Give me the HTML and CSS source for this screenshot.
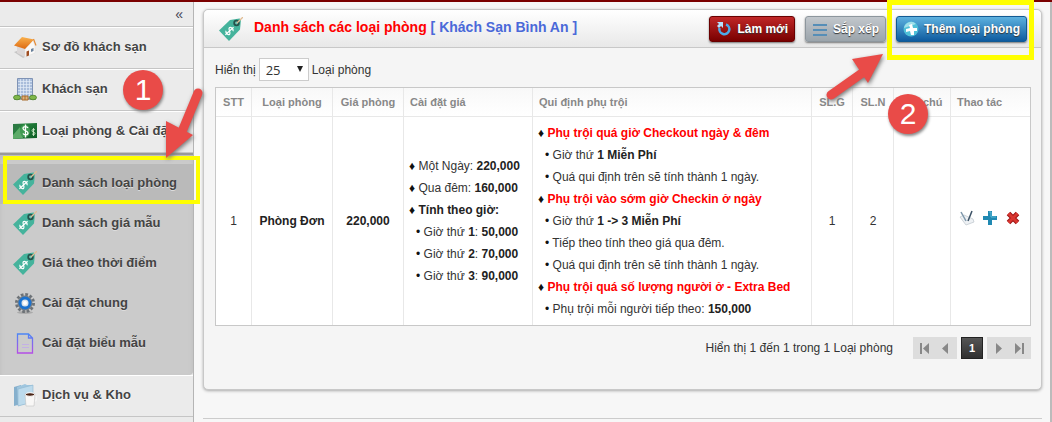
FILE: index.html
```html
<!DOCTYPE html>
<html lang="vi">
<head>
    <meta charset="UTF-8">
    <meta name="viewport" content="width=device-width, initial-scale=1.0">
    <title>Danh sách các loại phòng</title>
    <link rel="stylesheet" href="styles.css">
</head>
<body>
    <!-- Shared icons -->
    <svg class="sprite" aria-hidden="true">
        <symbol id="tag" viewBox="0 0 24 24">
            <path d="M0 13.500L11 3l9.500-1.500 1.500 1-1 10L10 24z" fill="#45b39c"/>
            <circle cx="17.500" cy="6" r="2.300" fill="#6fc4b2" stroke="#24524b" stroke-width="1.800"/>
            <path d="M18 6l6-6" stroke="#e0bd95" stroke-width="1.300"/>
            <path d="M2.500-2.500C1.500-4.500-2.500-4-2.500-2S2.500 0 2.500 2-1.500 4.500-2.500 2.500M0-5.500v11" transform="translate(10.500 14) rotate(48)" fill="none" stroke="#fff" stroke-width="1.200"/>
        </symbol>
        <linearGradient id="sheet" x1="0" y1="0" x2="0" y2="1">
            <stop offset="0" stop-color="#4c86f5"/>
            <stop offset="1" stop-color="#b44de6"/>
        </linearGradient>
        <linearGradient id="cash" x1="0" y1="0" x2="1" y2="1">
            <stop offset="0" stop-color="#2d8f45"/>
            <stop offset="1" stop-color="#0d5c25"/>
        </linearGradient>
        <linearGradient id="roof" x1="0" y1="0" x2="0" y2="1">
            <stop offset="0" stop-color="#f9b04c"/>
            <stop offset="1" stop-color="#dd6a12"/>
        </linearGradient>
    </svg>

    <div class="topbar"></div>
    <div class="layout">
        <nav class="sidebar">
            <button class="collapse" type="button" aria-label="Thu gọn">«</button>
            <a class="menu-item" href="#">
                <svg class="icon" viewBox="0 0 24 24">
                    <path d="M1 17l9 6 2-1-8-6z" fill="#c6c6c6"/>
                    <path d="M4 11l8 3v8l-8-4z" fill="#dcd8d8"/>
                    <path d="M12 14l8-9 2 6v7l-10 4z" fill="#faf8f6" stroke="#ddd" stroke-width=".5"/>
                    <path d="M1 10.500L9 2l12 2.500-9 9.500z" fill="url(#roof)"/>
                    <path d="M20.500 4l2.500 6.500" stroke="#e58a35" stroke-width="1.200"/>
                    <path d="M13.500 16.500l2.500-1v5l-2.500 1z" fill="#9e4c20"/>
                    <path d="M18 14l2.500-1v3l-2.500 1z" fill="#68809b"/>
                </svg>
                Sơ đồ khách sạn
            </a>
            <a class="menu-item" href="#">
                <svg class="icon" viewBox="0 0 24 24">
                    <path d="M4.500 1.500h15v20h-15z" fill="#a9bddb" stroke="#7f93b5"/>
                    <path d="M5 4.500h14M5 7.500h14M5 10.500h14M5 13.500h14M5 16.500h14M7.500 2v17M10.500 2v17M13.500 2v17M16.500 2v17" stroke="#e4edf8" stroke-width=".7"/>
                    <path d="M1 22.500h22" stroke="#a5a59f"/>
                    <path d="M9 19h6v4H9z" fill="#dfb37b" stroke="#a86d2c"/>
                    <path d="M12 19v4" stroke="#a86d2c"/>
                    <ellipse cx="4" cy="20.500" rx="3.500" ry="2.300" fill="#7fb64a" stroke="#4a8128" stroke-width=".8"/>
                    <ellipse cx="20" cy="20.500" rx="3.500" ry="2.300" fill="#7fb64a" stroke="#4a8128" stroke-width=".8"/>
                </svg>
                Khách sạn
            </a>
            <a class="menu-item" href="#">
                <svg class="icon" viewBox="0 0 24 24">
                    <path d="M0 5l24-1v15l-24 1z" fill="url(#cash)"/>
                    <path d="M0 5h9l-9 9z" fill="#2c7a43"/>
                    <path d="M0 16l7-8 3 11-10 1z" fill="#5cab68"/>
                    <ellipse cx="12" cy="12" rx="5" ry="6.500" fill="#3f9a52"/>
                    <path d="M15 9c-1-2-5-2-5 .500s5 2 5 4.500-4 2.500-5 .500M12.500 5.500v13" fill="none" stroke="#fff" stroke-width="1.300"/>
                    <path d="M22 11c-1-1-3-1-3 .800s3 .800 3 2.500-2 1.500-3 .500M20.500 9v8" fill="none" stroke="#cfeaca" stroke-width=".9"/>
                </svg>
                Loại phòng &amp; Cài đặt
            </a>
            <div class="submenu">
                <a class="submenu-item active" href="#">
                    <svg class="icon"><use href="#tag"/></svg>
                    Danh sách loại phòng
                </a>
                <a class="submenu-item" href="#">
                    <svg class="icon"><use href="#tag"/></svg>
                    Danh sách giá mẫu
                </a>
                <a class="submenu-item" href="#">
                    <svg class="icon"><use href="#tag"/></svg>
                    Giá theo thời điểm
                </a>
                <a class="submenu-item" href="#">
                    <svg class="icon" viewBox="0 0 24 24">
                        <ellipse cx="12" cy="21.500" rx="8" ry="1.500" fill="#aaa"/>
                        <circle cx="12" cy="12" r="8.500" fill="none" stroke="#6d7277" stroke-width="3" stroke-dasharray="2.670 1.780"/>
                        <circle cx="12" cy="12" r="7.500" fill="#7b8085"/>
                        <circle cx="12" cy="12" r="5" fill="#dbe3ea" stroke="#1b72cf" stroke-width="3"/>
                        <circle cx="12" cy="12" r="2" fill="#fff"/>
                    </svg>
                    Cài đặt chung
                </a>
                <a class="submenu-item" href="#">
                    <svg class="icon" viewBox="0 0 24 24">
                        <path d="M4.500 3h11l4 4v15h-15zM15.500 3v4h4" fill="none" stroke="url(#sheet)" stroke-width="1.300"/>
                        <path d="M9 13.500h7M9 16.500h7" stroke="#c3b0e6"/>
                    </svg>
                    Cài đặt biểu mẫu
                </a>
            </div>
            <a class="menu-item" href="#">
                <svg class="icon" viewBox="0 0 24 24">
                    <path d="M1 4l7-2v19l-7 2z" fill="#86b0cd"/>
                    <path d="M4 4l8-3 2 1h6v17l-15 4z" fill="#9fc6df"/>
                    <path d="M5 6l15-4v17L5 23z" fill="#bcdaec" stroke="#8fb7d0" stroke-width=".6"/>
                    <path d="M21 13c3.500-1 3.500 5 0 5" fill="none" stroke="#f4f4f4" stroke-width="1.500"/>
                    <path d="M12 11h10l-1 12h-8z" fill="#f8f7f6" stroke="#bbb" stroke-width=".5"/>
                    <ellipse cx="17" cy="11.500" rx="4.500" ry="1.800" fill="#4b2415" stroke="#fff"/>
                </svg>
                Dịch vụ &amp; Kho
            </a>

            <div class="highlight highlight-menu"></div>
            <svg class="arrow arrow-menu" viewBox="0 0 46 84">
                <path d="M37 9L20 50" stroke="#e94b48" stroke-width="9" stroke-linecap="round"/>
                <path d="M5 74V37l27 14z" fill="#e94b48"/>
            </svg>
            <span class="badge badge-menu">1</span>
        </nav>

        <main class="content">
            <section class="panel">
                <header class="panel-header">
                    <svg class="icon"><use href="#tag"/></svg>
                    <h1>Danh sách các loại phòng <span>[ Khách Sạn Bình An ]</span></h1>
                    <button class="btn btn-red" type="button">
                        <svg viewBox="0 0 16 16">
                            <path d="M10 3.500A5 5 0 1 1 3.500 7" fill="none" stroke="#4cabea" stroke-width="2.500"/>
                            <path d="M1 1h6v6L5 5 3 7 1 5l2-2z" fill="#b4e2ff"/>
                        </svg>
                        Làm mới
                    </button>
                    <button class="btn btn-gray" type="button">
                        <svg viewBox="0 0 16 16"><path d="M1 4h14M1 9h14M1 14h14" stroke="#568eb7" stroke-width="2"/></svg>
                        Sắp xếp
                    </button>
                    <button class="btn btn-blue" type="button">
                        <svg viewBox="0 0 16 16">
                            <circle cx="8" cy="8" r="7.500" fill="#4fc0d8"/>
                            <path d="M1 7a7 7 0 0 1 12-4z" fill="#a1e0ea"/>
                            <path d="M6 4l3-1 1 4 4 0v3l-3 0 0 4-3 0-1-4-4 1V8l4-1z" fill="#fff"/>
                        </svg>
                        Thêm loại phòng
                    </button>
                </header>

                <div class="panel-body">
                    <div class="length">
                        <label for="length">Hiển thị</label>
                        <div class="select-box">
                            <select id="length">
                                <option>25</option>
                            </select>
                        </div>
                        <label for="length">Loại phòng</label>
                    </div>

                    <table>
                        <colgroup>
                            <col class="col-stt">
                            <col class="col-room">
                            <col class="col-price">
                            <col class="col-setup">
                            <col>
                            <col class="col-count">
                            <col class="col-count">
                            <col class="col-note">
                            <col class="col-action">
                        </colgroup>
                        <thead>
                            <tr>
                                <th class="center">STT</th>
                                <th class="center">Loại phòng</th>
                                <th class="center">Giá phòng</th>
                                <th>Cài đặt giá</th>
                                <th>Qui định phụ trội</th>
                                <th class="center">SL.G</th>
                                <th class="center">SL.N</th>
                                <th class="center">Ghi chú</th>
                                <th>Thao tác</th>
                            </tr>
                        </thead>
                        <tbody>
                            <tr>
                                <td class="center">1</td>
                                <td class="center"><b>Phòng Đơn</b></td>
                                <td class="center"><b>220,000</b></td>
                                <td>
                                    <ul>
                                        <li>Một Ngày: <b>220,000</b></li>
                                        <li>Qua đêm: <b>160,000</b></li>
                                        <li><b>Tính theo giờ:</b></li>
                                        <li class="sub">Giờ thứ <b>1</b>: <b>50,000</b></li>
                                        <li class="sub">Giờ thứ <b>2</b>: <b>70,000</b></li>
                                        <li class="sub">Giờ thứ <b>3</b>: <b>90,000</b></li>
                                    </ul>
                                </td>
                                <td>
                                    <ul>
                                        <li><b class="red">Phụ trội quá giờ Checkout ngày &amp; đêm</b></li>
                                        <li class="sub">Giờ thứ <b>1 Miễn Phí</b></li>
                                        <li class="sub">Quá qui định trên sẽ tính thành 1 ngày.</li>
                                        <li><b class="red">Phụ trội vào sớm giờ Checkin ở ngày</b></li>
                                        <li class="sub">Giờ thứ <b>1 -&gt; 3 Miễn Phí</b></li>
                                        <li class="sub">Tiếp theo tính theo giá qua đêm.</li>
                                        <li class="sub">Quá qui định trên sẽ tính thành 1 ngày.</li>
                                        <li><b class="red">Phụ trội quá số lượng người ở - Extra Bed</b></li>
                                        <li class="sub">Phụ trội mỗi người tiếp theo: <b>150,000</b></li>
                                    </ul>
                                </td>
                                <td class="center">1</td>
                                <td class="center">2</td>
                                <td></td>
                                <td>
                                    <div class="actions">
                                        <button type="button" aria-label="Sửa">
                                            <svg viewBox="0 0 16 16">
                                                <path d="M1 7l4-2 9 4 1 3-8 3z" fill="#eef1f4" stroke="#c3cad0" stroke-width=".8"/>
                                                <path d="M2 2l5 9" stroke="#7d97ab" stroke-width="1.500"/>
                                                <path d="M13 1L9 11" stroke="#3c5266" stroke-width="1.500"/>
                                            </svg>
                                        </button>
                                        <button type="button" aria-label="Thêm">
                                            <svg viewBox="0 0 16 16">
                                                <path d="M6 1h4v5h5v4h-5v5H6v-5H1V6h5z" fill="#2089b2"/>
                                                <path d="M7 2h2v5h5" fill="none" stroke="#5bb8d6"/>
                                            </svg>
                                        </button>
                                        <button type="button" aria-label="Xóa">
                                            <svg viewBox="0 0 16 16">
                                                <path d="M3.500 3.500l9 9M12.500 3.500l-9 9" stroke="#9f1616" stroke-width="5"/>
                                                <path d="M3.500 3.500l9 9M12.500 3.500l-9 9" stroke="#d93630" stroke-width="3"/>
                                            </svg>
                                        </button>
                                    </div>
                                </td>
                            </tr>
                        </tbody>
                    </table>

                    <div class="table-footer">
                        <span>Hiển thị 1 đến 1 trong 1 Loại phòng</span>
                        <div class="pager">
                            <div class="pager-group">
                                <button type="button" aria-label="Trang đầu">
                                    <svg viewBox="0 0 22 22"><path d="M7 6h2v11H7zM16 6v11l-6-5.500z"/></svg>
                                </button>
                                <button type="button" aria-label="Trang trước">
                                    <svg viewBox="0 0 22 22"><path d="M13 6v11l-6-5.500z"/></svg>
                                </button>
                            </div>
                            <button class="current" type="button">1</button>
                            <div class="pager-group">
                                <button type="button" aria-label="Trang sau">
                                    <svg viewBox="0 0 22 22"><path d="M9 6v11l6-5.500z"/></svg>
                                </button>
                                <button type="button" aria-label="Trang cuối">
                                    <svg viewBox="0 0 22 22"><path d="M6 6v11l6-5.500zM13 6h2v11h-2z"/></svg>
                                </button>
                            </div>
                        </div>
                    </div>
                </div>
            </section>
            <hr>

            <div class="highlight highlight-add"></div>
            <svg class="arrow arrow-add" viewBox="0 0 68 56">
                <path d="M10 46L44 22" stroke="#e94b48" stroke-width="9" stroke-linecap="round"/>
                <path d="M62 5L47 34 31 10z" fill="#e94b48"/>
            </svg>
            <span class="badge badge-add">2</span>
        </main>
    </div>
</body>
</html>
```
FILE: styles.css
```css
* {
    box-sizing: border-box;
}
body {
    margin: 0;
    min-height: 100vh;
    display: flex;
    flex-direction: column;
    font-family: "Liberation Sans", Arial, sans-serif;
    font-size: 12px;
    color: #333;
    background-color: #f7f7f7;
}
button {
    font-family: inherit;
    cursor: pointer;
}
.sprite {
    position: absolute;
    width: 0;
    height: 0;
}
.topbar {
    height: 2px;
    background-color: #7b0000;
}
.layout {
    flex: 1;
    display: flex;
    border-right: 2px solid #bbb;
}
.icon {
    width: 24px;
    height: 24px;
    flex: none;
}

/* Sidebar */
.sidebar {
    position: relative;
    z-index: 1;
    flex: none;
    width: 194px;
    background-color: #ebebeb;
    border-right: 1px solid #b5b5b5;
}
.collapse {
    display: block;
    width: 100%;
    height: 25px;
    padding: 0 10px;
    border: none;
    border-bottom: 1px solid #c5c5c5;
    background: none;
    color: #445;
    font-size: 14px;
    text-align: right;
}
.menu-item,
.submenu-item {
    display: flex;
    align-items: center;
    gap: 5px;
    padding: 0 0 4px 13px;
    color: #444;
    font-size: 13px;
    font-weight: bold;
    text-decoration: none;
    text-shadow: 0 1px 0 #fff;
    white-space: nowrap;
    overflow: hidden;
}
.menu-item .icon,
.submenu-item .icon {
    margin-top: 2px;
}
.menu-item {
    height: 42px;
    border-top: 1px solid #fff;
    border-bottom: 1px solid #c5c5c5;
}
.submenu {
    padding: 9px 0 11px;
    background-color: #cbcbcb;
    border-top: 2px solid #999;
    border-bottom-right-radius: 4px;
    box-shadow: inset 0 3px 4px #bbb;
}
.submenu-item {
    height: 40px;
    text-shadow: 0 1px 0 #ddd;
}
.submenu-item.active {
    background-color: #bababa;
}

/* Panel */
.content {
    position: relative;
    flex: 1;
    min-width: 0;
    padding: 7px 8px 0 9px;
}
.panel {
    border: 1px solid #c8c8c8;
    border-radius: 5px;
    background-color: #f5f5f5;
    box-shadow: 0 1px 3px #aaa;
}
.panel-header {
    display: flex;
    align-items: center;
    height: 38px;
    padding: 0 14px 0 15px;
    border-bottom: 1px solid #c8c8c8;
    border-radius: 5px 5px 0 0;
    background: linear-gradient(#fff, #e8e8e8);
}
.panel-header h1 {
    flex: 1;
    margin: 0 0 4px 11px;
    color: #f00;
    font-size: 14px;
    white-space: nowrap;
}
.panel-header h1 span {
    color: #4a69d9;
}
.btn {
    display: flex;
    align-items: center;
    gap: 5px;
    height: 26px;
    margin-left: 10px;
    padding: 0 6px;
    border: 1px solid;
    border-radius: 3px;
    box-shadow: 0 1px 2px #777;
    color: #fff;
    font-size: 12px;
    font-weight: bold;
    text-shadow: 0 1px 1px #333;
    white-space: nowrap;
}
.btn svg {
    width: 16px;
    height: 16px;
}
.btn-red {
    border-color: #690000;
    background: linear-gradient(#c02727, #780000);
}
.btn-gray {
    border-color: #8d969d;
    background: linear-gradient(#c2c7cc, #9ba4ab);
}
.btn-blue {
    border-color: #125a93;
    background: linear-gradient(#5db1df, #0e5b9f);
}
.panel-body {
    padding: 10px 10px 30px 11px;
}
.length {
    display: flex;
    align-items: center;
    gap: 3px;
    height: 23px;
    margin-bottom: 6px;
}
.select-box {
    position: relative;
}
.select-box select {
    display: block;
    appearance: none;
    width: 50px;
    height: 23px;
    padding: 0 6px;
    border: 1px solid #ccc;
    border-radius: 0;
    background-color: #fff;
    color: #333;
    font-family: "Open Sans", sans-serif;
    font-size: 13px;
}
.select-box::after {
    content: "";
    position: absolute;
    top: 8px;
    right: 6px;
    border: 3px solid transparent;
    border-top: 6px solid #222;
    pointer-events: none;
}

/* Table */
table {
    width: 100%;
    table-layout: fixed;
    border-collapse: separate;
    border-spacing: 0;
    border: 1px solid #c8c8c8;
    background-color: #fff;
}
.col-stt { width: 36px; }
.col-room { width: 81px; }
.col-price { width: 71px; }
.col-setup { width: 129px; }
.col-count { width: 41px; }
.col-note { width: 57px; }
.col-action { width: 79px; }
th,
td {
    padding: 0 6px;
    border-right: 1px solid #e8e8e8;
    text-align: left;
    white-space: nowrap;
}
th:last-child,
td:last-child {
    border-right: none;
}
th {
    height: 29px;
    border-bottom: 1px solid #e8e8e8;
    background: linear-gradient(#f8f8f8, #fff);
    color: #888;
    font-size: 11px;
}
td {
    padding: 5px;
}
.center {
    padding-left: 0;
    padding-right: 0;
    text-align: center;
}
ul {
    margin: 0;
    padding: 0;
    list-style: none;
    line-height: 22px;
}
li::before {
    content: "♦ ";
    color: #111;
}
li.sub {
    padding-left: 7px;
}
li.sub::before {
    content: "• ";
}
b {
    color: #222;
}
.red {
    color: #f00;
}
.actions {
    display: flex;
    gap: 7px;
    padding-left: 3px;
}
.actions button {
    width: 16px;
    height: 16px;
    margin-bottom: 6px;
    padding: 0;
    border: none;
    background: none;
}
.actions svg {
    display: block;
}

/* Pager */
.table-footer {
    display: flex;
    justify-content: flex-end;
    align-items: center;
    gap: 20px;
    margin-top: 11px;
}
.pager {
    display: flex;
    gap: 4px;
}
.pager-group {
    display: flex;
}
.pager button {
    width: 22px;
    height: 22px;
    padding: 0;
    border: none;
    background-color: #ddd;
}
.pager svg {
    display: block;
    fill: #888;
}
.pager .current {
    border: 1px solid #222;
    background: linear-gradient(#555, #303030);
    color: #fff;
    font-size: 11px;
    font-weight: bold;
}
hr {
    margin: 28px 0 0;
    border: none;
    border-top: 1px solid #ccc;
}

/* Guide marks */
.highlight {
    position: absolute;
    border: 4px solid #ff0;
    pointer-events: none;
}
.highlight-menu {
    top: 154px;
    left: 3px;
    right: -7px;
    height: 48px;
}
.highlight-add {
    top: -2px;
    right: 16px;
    width: 147px;
    height: 60px;
    border-width: 5px;
}
.arrow {
    position: absolute;
    fill: none;
    filter: drop-shadow(1px 2px 2px #777);
    pointer-events: none;
}
.arrow-menu {
    top: 82px;
    left: 161px;
    width: 46px;
    height: 84px;
}
.arrow-add {
    top: 47px;
    right: 161px;
    width: 68px;
    height: 56px;
}
.badge {
    position: absolute;
    width: 40px;
    height: 40px;
    border-radius: 50%;
    background-color: #e94b48;
    box-shadow: 1px 2px 3px #888;
    color: #fff;
    font-size: 30px;
    line-height: 40px;
    text-align: center;
}
.badge-menu {
    top: 68px;
    left: 123px;
}
.badge-add {
    top: 92px;
    right: 122px;
}
```
